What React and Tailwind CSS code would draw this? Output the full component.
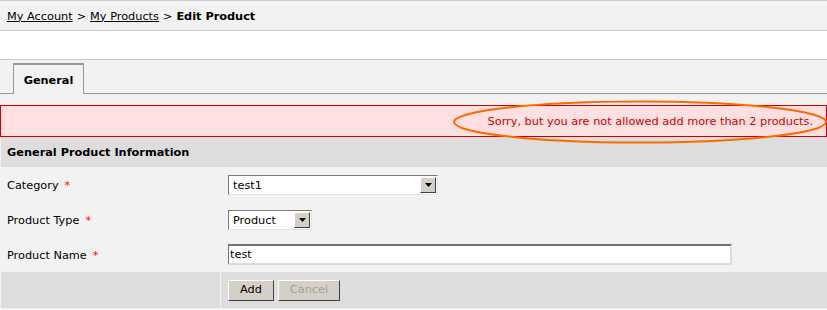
import React from "react";

function SelectBox({ value, width }) {
  return (
    <div
      className="flex h-[20px] items-stretch bg-white border-t border-l border-[#7a7a7a] border-b border-r border-b-[#e3e3e3] border-r-[#e3e3e3]"
      style={{ width }}
    >
      <div className="flex-1 flex items-center pl-[4px] pt-[2px] text-[11.3px] text-black leading-none">{value}</div>
      <div className="my-[1px] mr-[1px] w-[16px] flex items-center justify-center bg-[#d4d0c8] border-t border-l border-white border-b border-r border-b-[#404040] border-r-[#404040]">
        <svg width="7" height="4" viewBox="0 0 7 4">
          <polygon points="0,0 7,0 3.5,4" fill="#000" />
        </svg>
      </div>
    </div>
  );
}

function Btn({ children, disabled, w }) {
  return (
    <div
      className={`h-[21px] pt-[1px] flex items-center justify-center bg-[#d4d0c8] border border-t-white border-l-white border-b-[#404040] border-r-[#404040] text-[11.3px] ${disabled ? "text-[#a0a0a0]" : "text-black"}`}
      style={{ width: w }}
    >
      {children}
    </div>
  );
}

function Row({ label, children }) {
  return (
    <div className="flex h-[35px]">
      <div className="w-[220px] flex items-center pl-[7px] pt-[3px] text-[11.3px] text-black">
        {label}
        <span className="ml-[6px] text-[#ff0000]">*</span>
      </div>
      <div className="flex-1 flex items-center pl-[8px]">{children}</div>
    </div>
  );
}

export default function App() {
  return (
    <div
      className="relative w-[827px] h-[310px] bg-[#f2f2f2] overflow-hidden"
      style={{ fontFamily: '"DejaVu Sans", Verdana, sans-serif' }}
    >
      {/* breadcrumb */}
      <div className="h-[31px] pt-[3px] border-t border-b border-[#cccccc] flex items-center pl-[7px] text-[11.3px] text-black">
        <span className="underline">My Account</span>
        <span className="mx-[4px]">&gt;</span>
        <span className="underline">My Products</span>
        <span className="mx-[4px]">&gt;</span>
        <span className="font-bold">Edit Product</span>
      </div>
      {/* white strip */}
      <div className="h-[29px] bg-white border-b border-[#cccccc]" />
      {/* tabs */}
      <div className="h-[34px] flex items-end border-b border-[#919b9c]">
        <div className="ml-[13px] w-[71px] h-[31px] pt-[3px] -mb-[1px] bg-[#f2f2f2] border-t border-l border-r border-[#919b9c] border-t-2 flex items-center justify-center text-[11.3px] font-bold text-black">
          General
        </div>
      </div>
      {/* error */}
      <div className="mt-[11px] h-[32px] pt-[2px] bg-[#ffe0e0] border border-[#cc0000] flex items-center justify-end pr-[13px] text-[11.3px] text-[#cc0000]">
        Sorry, but you are not allowed add more than 2 products.
      </div>
      {/* section header */}
      <div className="ml-[1px] h-[30px] pt-[3px] bg-[#dddddd] flex items-center pl-[6px] text-[11.3px] font-bold text-black">
        General Product Information
      </div>
      <Row label="Category">
        <SelectBox value="test1" width={210} />
      </Row>
      <Row label="Product Type">
        <SelectBox value="Product" width={84} />
      </Row>
      <Row label="Product Name">
        <div className="w-[504px] h-[21px] pt-[2px] bg-white border-t-2 border-l border-[#737373] border-b-2 border-r-2 border-b-[#dcdcdc] border-r-[#dcdcdc] flex items-center pl-[1px] text-[11.3px] text-black">
          test
        </div>
      </Row>
      {/* buttons row */}
      <div className="flex h-[36px] gap-[1px] pl-[1px]">
        <div className="w-[219px] bg-[#dddddd]" />
        <div className="flex-1 bg-[#dddddd] flex items-center gap-[4px] pl-[7px]">
          <Btn w={46}>Add</Btn>
          <Btn w={62} disabled>Cancel</Btn>
        </div>
      </div>
      {/* annotation ellipse */}
      <svg className="absolute left-[450px] top-[99px] pointer-events-none" width="380" height="47" viewBox="0 0 380 47">
        <ellipse cx="190" cy="23" rx="186" ry="20.5" fill="none" stroke="#ff6a00" strokeWidth="2" />
      </svg>
    </div>
  );
}
